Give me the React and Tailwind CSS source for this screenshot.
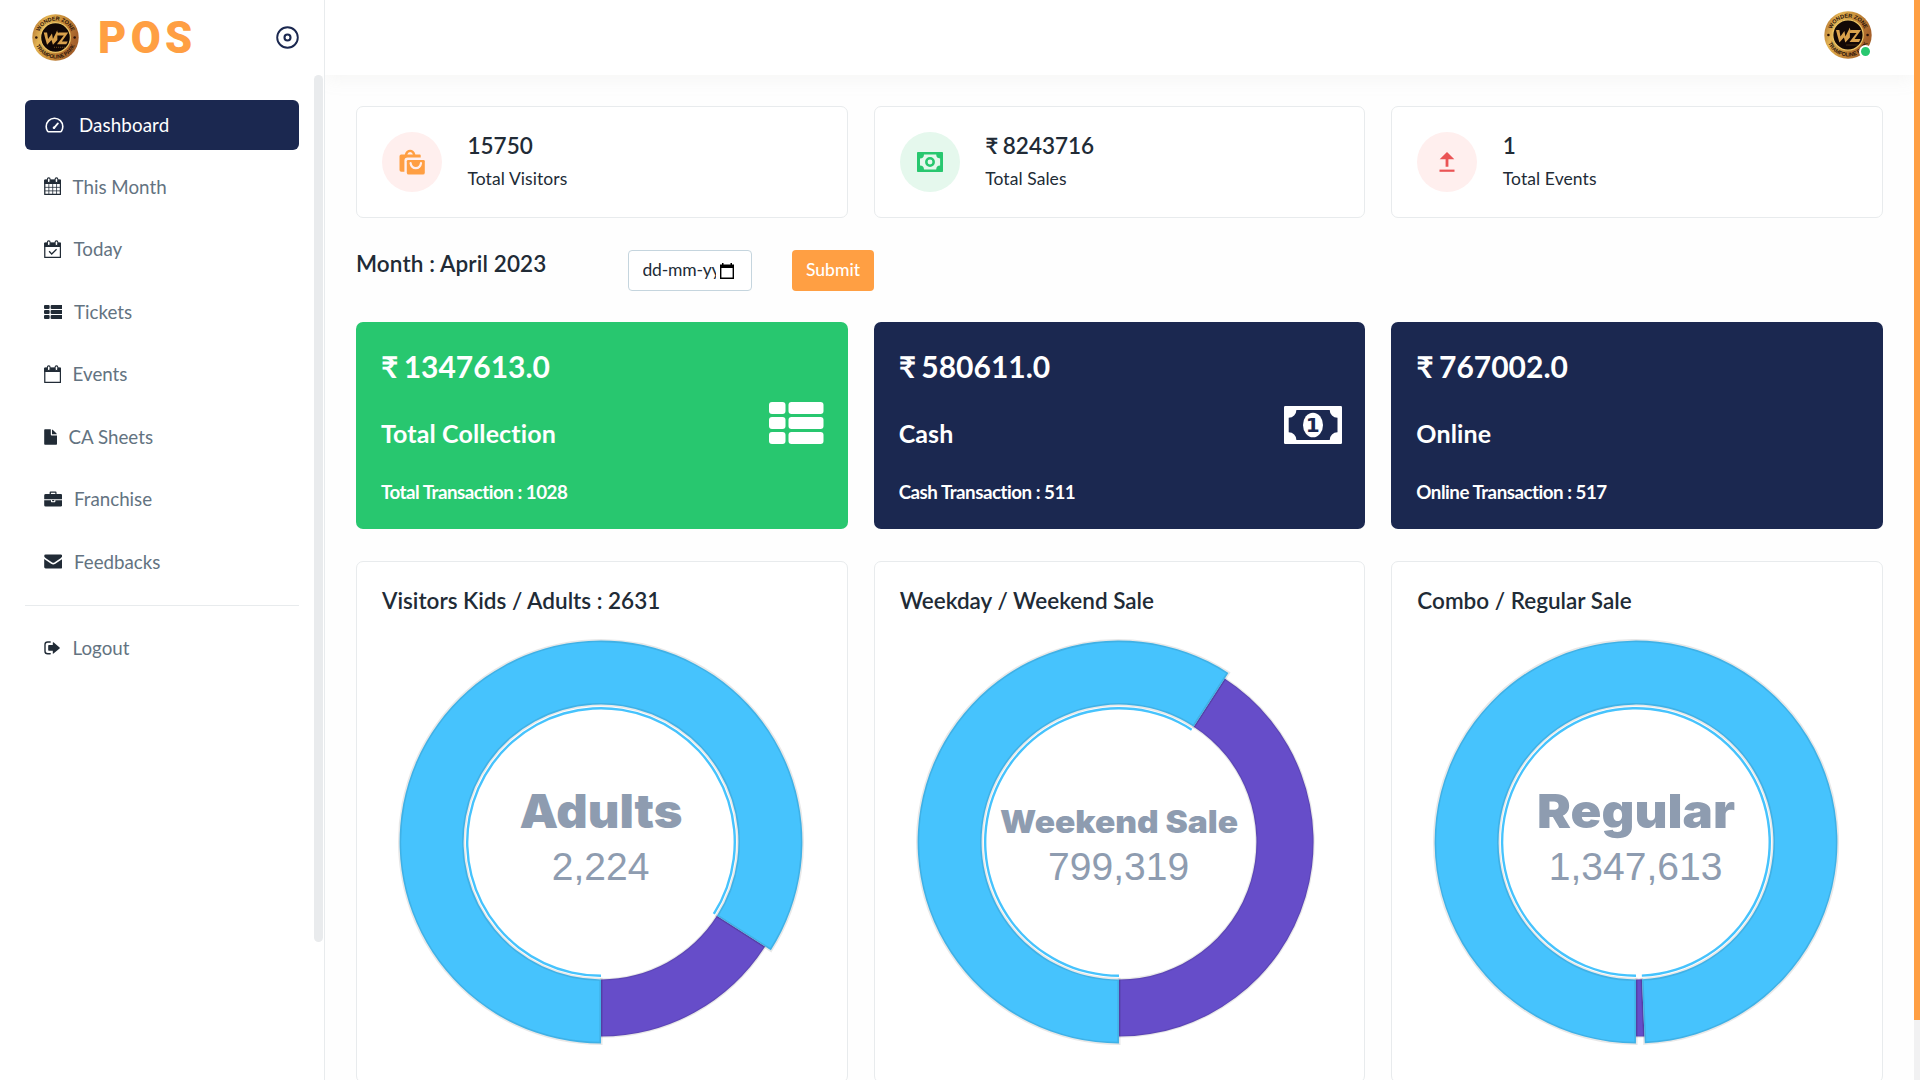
import React from "react";

const LATO = "font-['Lato',sans-serif] [font-variant-ligatures:none]";

/* ---------- Logo ---------- */
function Logo({ id, className }) {
  return (
    <svg viewBox="0 0 48 48" className={className}>
      <defs>
        <linearGradient id={`${id}-gold`} x1="0" y1="0" x2="1" y2="0.35">
          <stop offset="0" stopColor="#a8662a" />
          <stop offset="0.3" stopColor="#e3b454" />
          <stop offset="0.6" stopColor="#c98f3a" />
          <stop offset="1" stopColor="#a5602a" />
        </linearGradient>
        <path id={`${id}-top`} d="M6.6 24a17.4 17.4 0 0 1 34.8 0" />
        <path id={`${id}-bottom`} d="M2.6 24a21.4 21.4 0 0 0 42.8 0" />
      </defs>
      <circle cx="24" cy="24" r="23.7" fill={`url(#${id}-gold)`} />
      <circle cx="24" cy="24" r="15.2" fill="#120806" stroke="#edc566" strokeWidth="1.2" />
      <g fill="#2a120a" fontFamily="Liberation Sans, sans-serif" fontWeight="700" fontSize="5.6" textAnchor="middle">
        <text><textPath href={`#${id}-top`} startOffset="50%" textLength="42">WONDER ZONE</textPath></text>
        <text><textPath href={`#${id}-bottom`} startOffset="50%" textLength="50" lengthAdjust="spacingAndGlyphs">TRAMPOLINE PARK</textPath></text>
      </g>
      <circle cx="4.4" cy="24" r="1.3" fill="#2a120a" />
      <circle cx="43.6" cy="24" r="1.3" fill="#2a120a" />
      <path d="M12 19l3.4 0 1 6.500 4-5.500 1 5.500 4.500-9 0 10-4.500 5-1.500-5-4.500 5-2-7zM25 17l4 5-3 0M27 19h10l-6.500 9h6l-1.500 3h-9.500l7-9h-5z" fill="#d9a14c" />
      <path d="M22.500 34h11" stroke="#a8762f" strokeWidth="0.7" strokeDasharray="1 1" />
    </svg>
  );
}

/* ---------- Sidebar icons ---------- */
function GaugeIcon() {
  return (
    <svg viewBox="0 0 19 16" className="h-4 w-[19px]" fill="none" stroke="#fff" strokeWidth="1.6" strokeLinecap="round" strokeLinejoin="round">
      <path d="M2.600 14.200A8 8 0 0 1 1.200 9.500a8.300 8.300 0 0 1 16.600 0 8 8 0 0 1-1.400 4.700Q16.100 14.700 15.500 14.700h-12Q2.900 14.700 2.600 14.200z" />
      <path d="M9.300 10.600L12.900 6.400" strokeWidth="1.8" />
      <circle cx="9" cy="10.700" r="1.300" fill="#fff" stroke="none" />
    </svg>
  );
}

function CalendarIcon({ kind }) {
  return (
    <svg viewBox="0 0 18 19" className="h-[19px] w-[17.4px]">
      <path d="M0.800 3.200h16.200v14.500H0.800z" fill="none" stroke="#212b36" strokeWidth="1.300" strokeLinejoin="round" />
      <path d="M0.200 3.200Q0.200 2.300 1.100 2.300h15.600q.9 0 .9.900V7H.2z" fill="#212b36" />
      <rect x="3.500" y="0.600" width="2.800" height="4.700" rx="1.300" fill="#fff" stroke="#212b36" strokeWidth="1.100" />
      <rect x="11.500" y="0.600" width="2.800" height="4.700" rx="1.300" fill="#fff" stroke="#212b36" strokeWidth="1.100" />
      {kind === "grid" && (
        <path d="M1 10.400h16M1 14h16M5 7v10.500M9 7v10.500M13 7v10.500" stroke="#212b36" strokeWidth="0.800" fill="none" />
      )}
      {kind === "check" && <path d="M5.300 11.300l2.700 2.900 5-5" stroke="#212b36" strokeWidth="1.300" fill="none" />}
    </svg>
  );
}

function ListIcon({ className, fill }) {
  return (
    <svg viewBox="0 0 55 42" className={className} fill={fill} preserveAspectRatio="none">
      {[0, 15, 30].map((y) => (
        <g key={y}>
          <rect x="0" y={y} width="16.500" height="12" rx="3" />
          <rect x="19.500" y={y} width="35" height="12" rx="3" />
        </g>
      ))}
    </svg>
  );
}

function FileIcon() {
  return (
    <svg viewBox="0 0 13 16" className="h-4 w-[13px]" fill="#212b36">
      <path d="M1 .300h5.800v5.200q0 .9.900.9H13V15q0 .8-.8.8H1q-.8 0-.8-.8V1.100Q.2.300 1 .300z" />
      <path d="M8 .400q.4.100.7.400l3.600 3.500q.4.400.5.900H8z" />
    </svg>
  );
}

function BriefcaseIcon() {
  return (
    <svg viewBox="0 0 19 16" className="h-4 w-[18.75px]" fill="#212b36">
      <path d="M5.700 3V1.300Q5.700.4 6.600.4h5.200q.9 0 .9.900V3h4.300q1.500 0 1.500 1.500V8.300H.200V4.500Q.200 3 1.700 3zM7 3h4.500V1.600H7z" fillRule="evenodd" />
      <path d="M.200 9.300h6.900v1.300q0 .6.600.6h3.200q.6 0 .6-.6V9.300h7v5q0 1.300-1.500 1.300H1.700Q.200 15.600.200 14.300z" />
      <rect x="8.200" y="9" width="2.200" height="1.200" />
    </svg>
  );
}

function MailIcon() {
  return (
    <svg viewBox="0 0 19 15" className="h-[15px] w-[18.75px]" fill="#212b36">
      <path d="M.200 2Q.200.500 1.700.500h15.400q1.400 0 1.400 1.300 0 1.200-1.300 2.100L10.500 8.500q-1.100.700-2.200 0L1.500 3.900Q.200 3 .200 2z" />
      <path d="M.200 5l7 4.800q2.200 1.400 4.300 0L18.500 5v8q0 1.500-1.500 1.500H1.700Q.200 14.500.200 13z" />
    </svg>
  );
}

function LogoutIcon() {
  return (
    <svg viewBox="0 0 17 14" className="h-3.5 w-[17.4px]">
      <path d="M6 1H3.500Q.8 1 .8 3.500v6.800q0 2.500 2.700 2.500H6" fill="none" stroke="#212b36" strokeWidth="1.400" strokeLinecap="round" />
      <path d="M9.300 1.300l6.100 5.100q.6.500 0 1l-6.100 5.200q-.7.400-.7-.4V9.800H4.700q-.7 0-.7-.7V4.700q0-.7.700-.7h3.900V1.700q0-.8.700-.4z" fill="#212b36" />
    </svg>
  );
}

/* ---------- Stat icons ---------- */
function BagsIcon() {
  return (
    <svg viewBox="0 0 26 26" className="h-[26px] w-[26px]">
      <path d="M5.800 5.500C6.400 2.500 8.600.800 11.100.800s4.700 1.700 5.300 4.700h4.400q.900 0 .900.900V8.600H8.600Q5.400 8.600 5.400 11.800v11H2.300Q.500 22.800.500 21V7.300Q.500 5.500 2.300 5.500zM8.300 5.500h5.600Q13.300 3 11.100 3T8.300 5.500z" fill="#ff9f43" fillRule="evenodd" />
      <path d="M9.200 11h15.300Q25.800 11 25.800 12.300v11.400q0 1.900-1.900 1.900H9.700q-1.900 0-1.900-1.900V12.300Q7.800 11 9.200 11z" fill="#ff9f43" />
      <path d="M11.600 14.200c.600 3.400 2.700 4.900 5.200 4.900s4.600-1.500 5.200-4.900" fill="none" stroke="#ffefee" strokeWidth="2.200" strokeLinecap="round" />
    </svg>
  );
}

function PaymentIcon() {
  return (
    <svg viewBox="0 0 26 20" className="h-5 w-[26px]">
      <rect width="26" height="20" rx="0.800" fill="#28c76f" />
      <path d="M7 2.600h12.200a4 4 0 0 0 3.900 3.900v7a4 4 0 0 0-3.900 3.900H7a4 4 0 0 0-4-3.900v-7a4 4 0 0 0 4-3.900z" fill="#e5f8ed" />
      <circle cx="13" cy="10" r="3.700" fill="none" stroke="#28c76f" strokeWidth="2.500" />
    </svg>
  );
}

function UploadIcon() {
  return (
    <svg viewBox="0 0 16 20" className="h-5 w-4" fill="#ea5455">
      <path d="M8 0l7.300 7.300H9.400v7.500H6.600V7.300H.700z" />
      <rect x="0.500" y="17.600" width="15" height="2.200" />
    </svg>
  );
}

function BanknoteIcon() {
  return (
    <svg viewBox="0 0 58 38" className="h-[38px] w-[58px]">
      <rect width="58" height="38" rx="1.200" fill="#fff" />
      <path d="M12.400 4h33.300a7.700 7.700 0 0 0 7.800 7.700v14.600a7.700 7.700 0 0 0-7.800 7.700H12.400a7.700 7.700 0 0 0-7.700-7.700V11.700A7.700 7.700 0 0 0 12.400 4z" fill="#1b2850" />
      <ellipse cx="29" cy="19" rx="10" ry="12.300" fill="#fff" />
      <text x="28.800" y="26.200" textAnchor="middle" fontFamily="DejaVu Sans, sans-serif" fontWeight="700" fontSize="20" fill="#1b2850">1</text>
    </svg>
  );
}

/* ---------- Sidebar ---------- */
const NAV = [
  { label: "This Month", icon: <CalendarIcon kind="grid" /> },
  { label: "Today", icon: <CalendarIcon kind="check" />, gap: "ml-[12.600px]" },
  { label: "Tickets", icon: <ListIcon className="h-3.5 w-[18.75px]" fill="#212b36" /> },
  { label: "Events", icon: <CalendarIcon /> },
  { label: "CA Sheets", icon: <FileIcon />, gap: "ml-3" },
  { label: "Franchise", icon: <BriefcaseIcon /> },
  { label: "Feedbacks", icon: <MailIcon /> },
];

function NavItem({ icon, label, gap }) {
  return (
    <a className="flex h-[50px] items-center pl-[18.600px]">
      {icon}
      <span className={`${gap || "ml-[11.600px]"} text-[18.75px] leading-6 text-[#637381]`}>{label}</span>
    </a>
  );
}

function Sidebar() {
  return (
    <aside className="relative z-10 flex h-[1080px] w-[325px] shrink-0 flex-col border-r border-[#e8ebed] bg-white">
      <div className="flex h-[75px] shrink-0 items-center pl-8 pr-[25px]">
        <Logo id="brand" className="h-[47px] w-[47px]" />
        <span className="ml-[19px] mt-0.5 font-['Roboto',sans-serif] text-[43.500px] font-black leading-[50px] tracking-[4.300px] text-[#ff9f43]">POS</span>
        <svg viewBox="0 0 23 23" className="ml-auto h-[23px] w-[23px]" fill="none" stroke="#1b2850">
          <circle cx="11.500" cy="11.500" r="10.300" strokeWidth="1.900" />
          <circle cx="11.500" cy="11.500" r="3" strokeWidth="2.100" />
        </svg>
      </div>
      <div className="flex justify-between">
        <nav className="ml-[25px] flex w-[274px] flex-col gap-[12.500px] pt-[25px]">
          <a className="-mb-[0.600px] flex h-[50px] items-center rounded-[6px] bg-[#1b2850] pl-5">
            <GaugeIcon />
            <span className="ml-[15px] text-[18.75px] leading-6 tracking-[0.100px] text-white">Dashboard</span>
          </a>
          {NAV.map((n) => (
            <NavItem key={n.label} {...n} />
          ))}
          <div className="mt-[5.500px] flex flex-col border-t border-[#e8ebed] pt-[17px]">
            <NavItem icon={<LogoutIcon />} label="Logout" />
          </div>
        </nav>
        <div className="mr-px h-[867px] w-[9px] rounded-full bg-[#e9ebed]" />
      </div>
    </aside>
  );
}

/* ---------- Cards ---------- */
function StatCard({ icon, circle, value, label }) {
  return (
    <div className="flex h-28 items-center rounded-[7px] border border-[#e8ebed] bg-white pl-[25px]">
      <div className={`flex h-[60px] w-[60px] items-center justify-center rounded-full ${circle}`}>{icon}</div>
      <div className="ml-[25.500px]">
        <div className="text-[22.5px] font-semibold leading-6 text-[#212b36] [word-spacing:-1px]">{value}</div>
        <div className="mt-[9px] text-[17.5px] leading-6 tracking-[0.080px] text-[#212b36]">{label}</div>
      </div>
    </div>
  );
}

function TotalCard({ bg, amount, title, note, icon }) {
  return (
    <div className={`flex h-[207px] items-center justify-between rounded-[7px] pl-[25px] text-white ${bg}`}>
      <div className="font-bold">
        <div className="text-[30px] leading-9 [word-spacing:-2px]">{amount}</div>
        <div className="mt-[34px] text-[25px] leading-[30px] tracking-[0.120px]">{title}</div>
        <div className="mt-8 -mb-px text-[18.75px] leading-6 tracking-[-0.500px]">{note}</div>
      </div>
      {icon}
    </div>
  );
}

/* Angles run counter-clockwise from the bottom of the ring. */
function point(r, deg) {
  const a = (deg * Math.PI) / 180;
  return `${(210 + r * Math.sin(a)).toFixed(2)} ${(210 + r * Math.cos(a)).toFixed(2)}`;
}

function sector(inner, outer, from, to) {
  const large = to - from > 180 ? 1 : 0;
  return `M${point(outer, from)}A${outer} ${outer} 0 ${large} 0 ${point(outer, to)}L${point(inner, to)}A${inner} ${inner} 0 ${large} 1 ${point(inner, from)}Z`;
}

function Donut({ split, label, labelSize, labelWidth, labelY, value }) {
  return (
    <svg viewBox="0 0 420 420" className="h-[420px] w-[420px]">
      <path d={sector(137.4, 194.6, 0, split)} fill="#664dc9" stroke="#000" strokeOpacity="0.09" strokeWidth="2.400" />
      <path d={sector(137.4, 201.4, split, 359.99)} fill="#46c3fd" stroke="#000" strokeOpacity="0.09" strokeWidth="3.200" />
      <path d={sector(132.6, 135, split, 359.99)} fill="#46c3fd" />
      <g fill="#8e9cb0" textAnchor="middle">
        <text x="210" y={labelY} fontFamily="Inter, Arial Black, sans-serif" fontSize={labelSize} fontWeight="900" textLength={labelWidth} lengthAdjust="spacingAndGlyphs">{label}</text>
        <text x="209.600" y="247.800" fontFamily="Liberation Sans, Arial, sans-serif" fontSize="39">{value}</text>
      </g>
    </svg>
  );
}

function ChartCard({ title, nudge, ...chart }) {
  return (
    <div className="h-[522px] rounded-[7px] border border-[#e8ebed] bg-white">
      <h4 className="pl-[25px] pt-[24.500px] text-[22.5px] font-semibold leading-[27px] text-[#212b36]">{title}</h4>
      <div className={`mt-[18px] flex justify-center ${nudge || "pr-px"}`}>
        <Donut {...chart} />
      </div>
    </div>
  );
}

export default function App() {
  return (
    <div className={`flex h-[1080px] w-[1920px] overflow-hidden bg-[#fefefe] ${LATO}`}>
      <Sidebar />
      <div className="flex min-w-0 flex-1 flex-col">
        <header className="flex h-[75px] shrink-0 items-start justify-end bg-white pr-[42px] pt-[11px] shadow-[0_4px_18px_rgba(169,169,160,0.10)]">
          <div className="relative h-12 w-12">
            <Logo id="user" className="h-12 w-12" />
            <span className="absolute bottom-[1px] right-0 h-[13px] w-[13px] rounded-full border-2 border-white bg-[#28c76f]" />
          </div>
        </header>
        <main className="flex flex-col pl-[31px] pr-[31px] pt-[31px]">
          <section className="grid grid-cols-3 gap-[26px]">
            <StatCard icon={<BagsIcon />} circle="bg-[#ffefee]" value="15750" label="Total Visitors" />
            <StatCard icon={<PaymentIcon />} circle="bg-[#e5f8ed]" value="₹ 8243716" label="Total Sales" />
            <StatCard icon={<UploadIcon />} circle="bg-[#ffefee]" value="1" label="Total Events" />
          </section>
          <section className="mt-8 flex h-[41px] items-start">
            <h4 className="w-[272px] text-[22.5px] font-semibold leading-[27px] tracking-[0.120px] text-[#212b36]">Month : April 2023</h4>
            <div className="flex h-[41px] w-[124px] items-center rounded-[4px] border border-[#c5d5de] bg-white pl-[13.500px]">
              <span className="-mt-px w-[73px] overflow-hidden whitespace-nowrap text-[17.5px] leading-6 tracking-[-0.200px] text-[#212b36]">dd-mm-yy</span>
              <svg viewBox="0 0 14 16" className="ml-1 h-4 w-3.5">
                <path d="M.700 3.500h12.600v11.800H.700z" fill="none" stroke="#000" strokeWidth="1.400" />
                <path d="M0 1.500h2V0h1.500v1.500h7V0H12v1.500h2V5H0z" />
              </svg>
            </div>
            <button className="ml-10 h-[41px] w-[82px] rounded-[4px] bg-[#ff9f43] pb-0.5 text-[17.5px] font-medium leading-6 text-white">Submit</button>
          </section>
          <section className="mt-[31px] grid grid-cols-3 gap-[26px]">
            <TotalCard
              bg="bg-[#28c76f]"
              amount="₹ 1347613.0"
              title="Total Collection"
              note="Total Transaction : 1028"
              icon={<ListIcon className="-mt-[5px] mr-6 h-[42px] w-[55px]" fill="#fff" />}
            />
            <TotalCard bg="bg-[#1b2850]" amount="₹ 580611.0" title="Cash" note="Cash Transaction : 511" icon={<div className="-mt-0.5 mr-[23.500px]"><BanknoteIcon /></div>} />
            <TotalCard bg="bg-[#1b2850]" amount="₹ 767002.0" title="Online" note="Online Transaction : 517" />
          </section>
          <section className="mt-8 grid grid-cols-3 gap-[26px]">
            <ChartCard title="Visitors Kids / Adults : 2631" split={57.5} label="Adults" labelSize={47} labelWidth={163} labelY={195.5} value="2,224" />
            <ChartCard title="Weekday / Weekend Sale" split={147.1} label="Weekend Sale" labelSize={31} labelWidth={238} labelY={200.5} value="799,319" />
            <ChartCard title="Combo / Regular Sale" nudge="pr-[3px]" split={2.5} label="Regular" labelSize={47} labelWidth={198} labelY={195.5} value="1,347,613" />
          </section>
        </main>
      </div>
      <div className="w-1.5 shrink-0 bg-[#f1f1f2]">
        <div className="h-[1020px] w-1.5 bg-[#ff9f43]" />
      </div>
    </div>
  );
}
